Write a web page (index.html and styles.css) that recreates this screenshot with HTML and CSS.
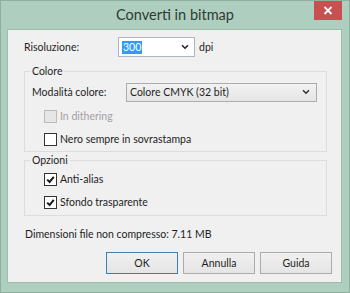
FILE: index.html
```html
<!DOCTYPE html>
<html lang="it">
<head>
    <meta charset="UTF-8">
    <title>Converti in bitmap</title>
    <link rel="stylesheet" href="styles.css">
</head>
<body>
    <div class="finestra">
        <div class="titolo">
            <span></span>
            <span class="titolo-testo">Converti in bitmap</span>
            <span class="chiudi">
                <svg width="10" height="9" viewBox="0 0 10 9"><path d="M1.5 1 L8.5 8 M8.5 1 L1.5 8" stroke="#fff" stroke-width="1.8"/></svg>
            </span>
        </div>

        <div class="contenuto">
            <div class="riga-risoluzione">
                <span class="etichetta-ris">Risoluzione:</span>
                <span class="combo">
                    <span class="selezione">300</span>
                    <svg class="freccia" width="8" height="6" viewBox="0 0 8 6"><path d="M1 1.2 L4 4.2 L7 1.2" fill="none" stroke="#222" stroke-width="1.6"/></svg>
                </span>
                <span class="unita">dpi</span>
            </div>

            <fieldset class="gruppo gruppo-colore">
                <legend>Colore</legend>
                <div class="riga-modalita">
                    <span class="etichetta-mod">Modalità colore:</span>
                    <span class="tendina">
                        <span>Colore CMYK (32 bit)</span>
                        <svg width="8" height="6" viewBox="0 0 8 6"><path d="M1 1.2 L4 4.2 L7 1.2" fill="none" stroke="#333" stroke-width="1.5"/></svg>
                    </span>
                </div>
                <div class="casella disattiva"><span class="quadro"></span>In dithering</div>
                <div class="casella"><span class="quadro"></span>Nero sempre in sovrastampa</div>
            </fieldset>

            <fieldset class="gruppo gruppo-opzioni">
                <legend>Opzioni</legend>
                <div class="casella"><span class="quadro"><svg width="11" height="11" viewBox="0 0 11 11"><path d="M2.2 5.6 L4.6 8 L8.8 2.8" fill="none" stroke="#1a1a1a" stroke-width="2"/></svg></span>Anti-alias</div>
                <div class="casella"><span class="quadro"><svg width="11" height="11" viewBox="0 0 11 11"><path d="M2.2 5.6 L4.6 8 L8.8 2.8" fill="none" stroke="#1a1a1a" stroke-width="2"/></svg></span>Sfondo trasparente</div>
            </fieldset>

            <div class="dimensioni">Dimensioni file non compresso: 7.11 MB</div>

            <div class="pulsanti">
                <span class="pulsante predefinito">OK</span>
                <span class="pulsante">Annulla</span>
                <span class="pulsante">Guida</span>
            </div>
        </div>
    </div>
</body>
</html>
```

FILE: styles.css
```css
/* Finestra di dialogo */
body {
    margin: 0;
    font-family: Lato, "Noto Sans", sans-serif;
    font-size: 10.5px;
    color: #1e1e1e;
}

.finestra {
    width: 350px;
    height: 293px;
    box-sizing: border-box;
    background-color: #aecfbf;
    border: 1px solid #8fb09f;
}

.titolo {
    display: grid;
    grid-template-columns: 1fr auto 1fr;
    align-items: start;
    height: 28px;
}

.titolo-testo {
    font-size: 14.5px;
    color: #2f3a35;
    line-height: 28px;
}

.chiudi {
    justify-self: end;
    margin-right: 7px;
    width: 28px;
    height: 19px;
    background-color: #c75050;
    display: flex;
    align-items: center;
    justify-content: center;
}

.contenuto {
    margin: 0 7px 0 6px;
    background-color: #f0f0f0;
    border: 1px solid #9cbcac;
    padding: 7px 0 0 16px;
    height: 245px;
}

/* Risoluzione */
.riga-risoluzione {
    display: flex;
    align-items: center;
    height: 20px;
}

.etichetta-ris {
    width: 94px;
}

.combo {
    width: 77px;
    height: 20px;
    box-sizing: border-box;
    border: 1px solid #a8b6c6;
    background-color: #fff;
    display: flex;
    align-items: center;
    justify-content: space-between;
    padding: 0 5px 0 3px;
}

.selezione {
    background-color: #3399ff;
    color: #fff;
    padding: 0 1px;
    line-height: 13px;
}

.unita {
    margin-left: 4px;
}

/* Gruppi */
.gruppo {
    margin: 6px 14px 0 0;
    border: 1px solid #dcdcdc;
    padding: 4px 9px 4px 7px;
    min-width: 0;
}

.gruppo legend {
    padding: 0 2px;
    margin-left: -2px;
    line-height: 16px;
}

.gruppo-opzioni {
    margin-top: 0;
    padding-top: 3px;
    padding-bottom: 5px;
}

.riga-modalita {
    display: flex;
    align-items: center;
    height: 18px;
    margin-bottom: 7px;
}

.etichetta-mod {
    width: 94px;
}

.tendina {
    flex: 1;
    height: 19px;
    box-sizing: border-box;
    border: 1px solid #acacac;
    background: linear-gradient(#f2f2f2, #e5e5e5);
    display: flex;
    align-items: center;
    justify-content: space-between;
    padding: 0 6px 0 3px;
}

.casella {
    display: flex;
    align-items: center;
    height: 16px;
    margin-left: 12px;
}

.casella + .casella {
    margin-top: 7px;
}

.quadro {
    width: 13px;
    height: 13px;
    box-sizing: border-box;
    border: 1px solid #333;
    background-color: #fff;
    margin-right: 3px;
    display: flex;
    align-items: center;
    justify-content: center;
}

.disattiva {
    color: #a0a0a0;
}

.disattiva .quadro {
    border-color: #bcbcbc;
    background-color: #e6e6e6;
}

.dimensioni {
    margin: 10px 0 0 1px;
    line-height: 16px;
}

/* Pulsanti */
.pulsanti {
    display: flex;
    justify-content: flex-end;
    gap: 5px;
    margin: 10px 9px 0 0;
}

.pulsante {
    width: 72px;
    height: 22px;
    box-sizing: border-box;
    border: 1px solid #acacac;
    background: linear-gradient(#f0f0f0, #e5e5e5);
    display: flex;
    align-items: center;
    justify-content: center;
}

.predefinito {
    border-color: #3c7fb1;
}
```
